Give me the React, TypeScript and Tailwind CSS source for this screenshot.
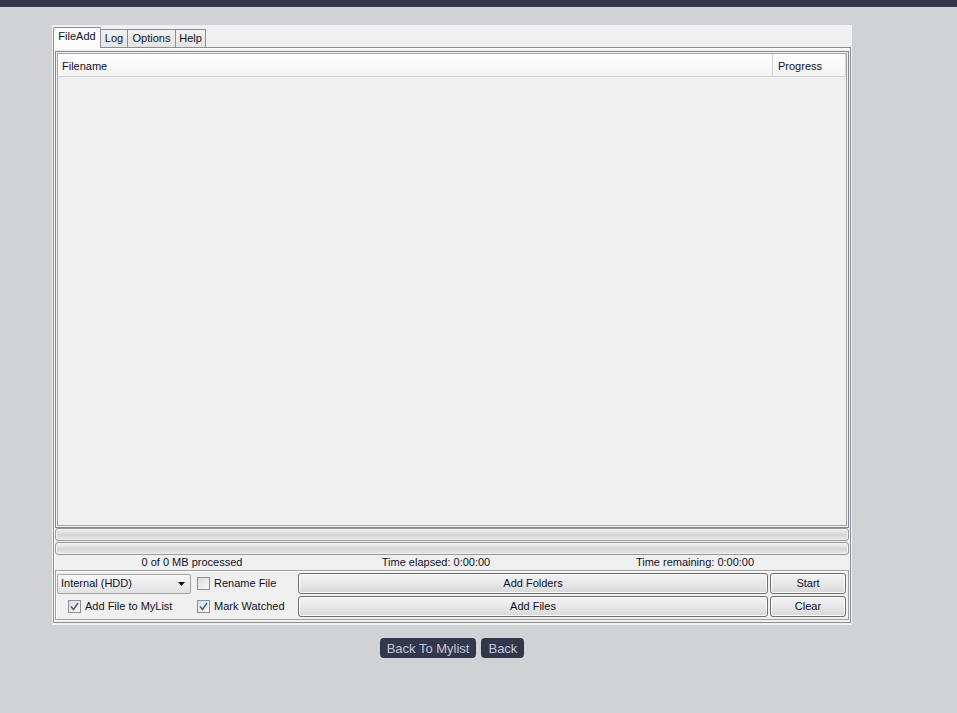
const font = { fontFamily: '"Liberation Sans", Arial, sans-serif' };

function Tab({ label, active, w }: { label: string; active?: boolean; w: string }) {
  return active ? (
    <div className={`${w} h-[21px] -mb-px relative z-10 border border-b-0 border-[#8c8e94] bg-[#fbfbfb] rounded-t-[2px] flex items-center justify-center pb-[3px] text-[11px] text-[#10102a]`}>
      {label}
    </div>
  ) : (
    <div className={`${w} h-[18px] border border-b-0 border-[#8c8e94] border-l-0 bg-gradient-to-b from-[#f2f2f2] to-[#e4e4e4] flex items-center justify-center text-[11px] text-[#10102a]`}>
      {label}
    </div>
  );
}

function Check({ checked }: { checked?: boolean }) {
  return (
    <span className="w-[13px] h-[13px] border border-[#8e8f8f] bg-gradient-to-br from-[#dcdcdc] to-[#fafafa] flex items-center justify-center shrink-0">
      {checked && (
        <svg width="9" height="9" viewBox="0 0 9 9">
          <path d="M1 4.5 L3.5 7.5 L8 1" fill="none" stroke="#4a5e96" strokeWidth="1.6" />
        </svg>
      )}
    </span>
  );
}

function Btn({ label, className }: { label: string; className: string }) {
  return (
    <div className={`${className} h-[21px] border border-[#707070] rounded-[3px] bg-gradient-to-b from-[#f3f3f3] via-[#e8e8e8] to-[#d8d8d8] shadow-[inset_0_0_0_1px_#fbfbfb] flex items-center justify-center text-[11px] text-[#10102a]`}>
      {label}
    </div>
  );
}

function Bar() {
  return (
    <div className="h-[13px] border border-[#9a9a9a] rounded-[3px] bg-gradient-to-b from-[#f4f4f4] via-[#d6d6d6] to-[#e6e6e6] shadow-[inset_0_0_0_1px_#f0f0f0]" />
  );
}

export default function App() {
  return (
    <div className="min-h-screen bg-[#d1d2d6]" style={font}>
      <div className="h-[7px] bg-[#33374b]" />
      <div className="ml-[52px] w-[800px]">
        <div className="mt-[18px] h-[600px] bg-[#f0f0f0] flex flex-col pl-[1px] pr-[1px] pt-[1px] pb-[2px]">
          <div className="flex items-end h-[21px]">
            <Tab label="FileAdd" active w="w-[48px]" />
            <Tab label="Log" w="w-[27px]" />
            <Tab label="Options" w="w-[48px]" />
            <Tab label="Help" w="w-[30px]" />
          </div>
          <div className="flex-1 border border-[#8c8e94] shadow-[inset_1px_1px_0_#ffffff] flex flex-col px-[1px] pt-[3px] pb-[2px]">
            <div className="h-[477px] border border-[#828790] p-[1px] flex">
              <div className="flex-1 border border-[#a5a5a5] flex flex-col bg-[#f0f0f0]">
                <div className="h-[23px] flex bg-gradient-to-b from-[#ffffff] to-[#f3f4f6] border-b border-[#d5d5d5] text-[11px] text-[#10102a]">
                  <div className="flex-1 flex items-center pt-[3px] pl-[4px] border-r border-[#d5d5d5]">Filename</div>
                  <div className="w-[73px] flex items-center pt-[3px] pl-[5px] border-r border-[#d5d5d5]">Progress</div>
                </div>
              </div>
            </div>
            <div className="flex flex-col gap-[1px]">
              <Bar />
              <Bar />
            </div>
            <div className="h-[15px] flex items-center text-[11px] text-[#10102a]">
              <div className="w-[274px] text-center">0 of 0 MB processed</div>
              <div className="w-[214px] text-center">Time elapsed: 0:00:00</div>
              <div className="flex-1 text-center pr-[2px]">Time remaining: 0:00:00</div>
            </div>
            <div className="flex-1 border border-[#a0a0a0] shadow-[inset_1px_1px_0_#ffffff] px-[1px] pt-[2px] flex flex-col gap-[2px] text-[11px] text-[#10102a]">
              <div className="flex items-center h-[21px]">
                <div className="w-[134px] h-[20px] border border-[#a3a3a3] rounded-[2px] bg-gradient-to-b from-[#f7f7f7] to-[#e2e2e2] flex items-center justify-between pl-[3px] pr-[5px]">
                  <span>Internal (HDD)</span>
                  <svg width="7" height="4" viewBox="0 0 7 4"><path d="M0 0 H7 L3.5 4 Z" fill="#111" /></svg>
                </div>
                <label className="ml-[6px] w-[101px] flex items-center gap-[4px]">
                  <Check />
                  <span>Rename File</span>
                </label>
                <Btn label="Add Folders" className="w-[470px]" />
                <Btn label="Start" className="ml-[2px] w-[76px]" />
              </div>
              <div className="flex items-center h-[21px]">
                <label className="ml-[11px] w-[129px] flex items-center gap-[4px]">
                  <Check checked />
                  <span>Add File to MyList</span>
                </label>
                <label className="w-[101px] flex items-center gap-[4px]">
                  <Check checked />
                  <span>Mark Watched</span>
                </label>
                <Btn label="Add Files" className="w-[470px]" />
                <Btn label="Clear" className="ml-[2px] w-[76px]" />
              </div>
            </div>
          </div>
        </div>
        <div className="mt-[13px] flex justify-center gap-[5px] text-[13px] text-[#c3c7d8]">
          <button className="h-[20px] px-[7px] rounded-[4px] bg-[#33374b] leading-none">Back To Mylist</button>
          <button className="h-[20px] px-[7px] rounded-[4px] bg-[#33374b] leading-none">Back</button>
        </div>
      </div>
    </div>
  );
}
